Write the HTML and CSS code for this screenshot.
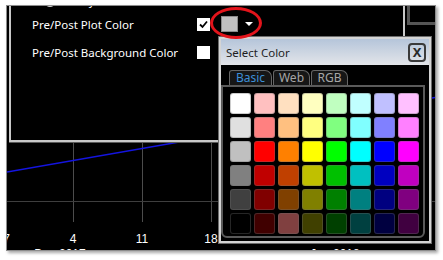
FILE: index.html
```html
<!DOCTYPE html>
<html lang="en">
<head>
    <meta charset="UTF-8">
    <meta name="viewport" content="width=device-width, initial-scale=1.0">
    <title>Select Color</title>
    <link rel="stylesheet" href="styles.css">
</head>
<body>
<div class="shot">
    <!-- chart behind the settings dialog -->
    <svg class="chart" width="428" height="244" viewBox="7 6 428 244">
        <g stroke="#4c4c4c" stroke-width="1">
            <line x1="73.5" y1="140" x2="73.5" y2="222"/>
            <line x1="142.5" y1="140" x2="142.5" y2="222"/>
            <line x1="211.5" y1="140" x2="211.5" y2="222"/>
        </g>
        <line x1="7" y1="201.5" x2="435" y2="201.5" stroke="#3e3e3e"/>
        <line x1="7" y1="172" x2="435" y2="97.5" stroke="#1414e0" stroke-width="1.6"/>
        <path d="M408.5 6 V23.5 H435" stroke="#555" stroke-width="3" fill="none"/>
        <g class="axis" fill="#fff" text-anchor="middle">
            <text x="6.5" y="243">7</text>
            <text x="73" y="243">4</text>
            <text x="142" y="243">11</text>
            <text x="211" y="243">18</text>
            <text x="60" y="258">Dec 2017</text>
            <text x="335" y="258">Jan 2018</text>
        </g>
    </svg>

    <!-- settings dialog -->
    <div class="settings">
        <div class="row row-top">
            <span class="radio"></span>
            <span class="radio-label">Daily</span>
        </div>
        <div class="row">
            <span class="label">Pre/Post Plot Color</span>
            <span class="check">
                <svg width="11" height="11" viewBox="0 0 11 11"><path d="M2 5.5 L4.5 8 L9 2.5" stroke="#000" stroke-width="1.8" fill="none"/></svg>
            </span>
            <span class="color-btn">
                <span class="color-box"></span>
                <span class="arrow"></span>
            </span>
        </div>
        <div class="row">
            <span class="label">Pre/Post Background Color</span>
            <span class="check"></span>
        </div>
    </div>

    <!-- colour picker popup -->
    <div class="picker">
        <div class="picker-title">
            <span>Select Color</span>
            <span class="close">X</span>
        </div>
        <div class="picker-body">
            <div class="tabs">
                <span class="tab active">Basic</span>
                <span class="tab">Web</span>
                <span class="tab">RGB</span>
            </div>
            <div class="swatches" id="swatches"></div>
        </div>
    </div>
</div>
<div class="ring"></div>

<script>
    const colors = [
        '#ffffff','#ffc0c0','#ffe0c0','#ffffc0','#c0ffc0','#c0ffff','#c0c0ff','#ffc0ff',
        '#e0e0e0','#ff8080','#ffc080','#ffff80','#80ff80','#80ffff','#8080ff','#ff80ff',
        '#c0c0c0','#ff0000','#ff8000','#ffff00','#00ff00','#00ffff','#0000ff','#ff00ff',
        '#808080','#c00000','#c04000','#c0c000','#00c000','#00c0c0','#0000c0','#c000c0',
        '#404040','#800000','#804000','#808000','#008000','#008080','#000080','#800080',
        '#000000','#400000','#804040','#404000','#004000','#004040','#000040','#400040'
    ];
    const grid = document.getElementById('swatches');
    colors.forEach(c => {
        const sw = document.createElement('span');
        sw.className = 'swatch';
        sw.style.background = c;
        grid.appendChild(sw);
    });
</script>
</body>
</html>
```

FILE: styles.css
```css
body {
  margin: 0;
  width: 443px;
  height: 260px;
  overflow: hidden;
  background-color: #fff;
  font-family: "Noto Sans", sans-serif;
  position: relative;
}
.shot {
  position: relative;
  margin: 6px 0 0 7px;
  width: 428px;
  height: 244px;
  background-color: #000;
  overflow: hidden;
  box-shadow: 0 0 0 1px #8c8c8c, 2px 2px 3px 1px rgba(0, 0, 0, 0.35);
}
.chart {
  display: block;
}
.axis {
  font-family: "Liberation Sans", Arial, sans-serif;
  font-size: 12px;
}

/* settings dialog */
.settings {
  position: absolute;
  left: 2px;
  top: -20px;
  width: 396px;
  height: 156px;
  box-sizing: border-box;
  border: 2px solid #c9c9c9;
  box-shadow: 0 1px 0 #5a5a5a;
  background-color: #000;
  padding-left: 21px;
}
.row {
  display: flex;
  align-items: center;
  height: 28px;
  color: #fff;
  font-size: 11.5px;
}
.row-top {
  height: 22px;
  align-items: flex-end;
}
.radio {
  width: 12px;
  height: 12px;
  border-radius: 50%;
  background-color: #d8d8d8;
  margin: 0 0 3px 12px;
}
.radio-label {
  margin: 0 0 3px 12px;
  line-height: 12px;
}
.label {
  width: 165px;
}
.check {
  width: 13px;
  height: 13px;
  background-color: #fff;
  display: flex;
  align-items: center;
  justify-content: center;
}
.color-btn {
  display: flex;
  align-items: center;
  margin-left: 11px;
}
.color-box {
  width: 15px;
  height: 14px;
  background-color: #c0c0c0;
  border: 1px solid #8a8a8a;
}
.arrow {
  margin-left: 7px;
  border-left: 4px solid transparent;
  border-right: 4px solid transparent;
  border-top: 4px solid #fff;
}

/* colour picker */
.picker {
  position: absolute;
  left: 211px;
  top: 30px;
  width: 214px;
  box-sizing: border-box;
  border: 1px solid #6c6c6c;
  background-color: #d4d4d4;
  padding: 2px;
}
.picker-title {
  height: 26px;
  display: flex;
  align-items: center;
  justify-content: space-between;
  padding: 0 3px 0 5px;
  background: linear-gradient(#b5c5da, #e3e5e9);
  color: #1e1e1e;
  font-size: 11.5px;
}
.close {
  width: 18px;
  height: 19px;
  box-sizing: border-box;
  border: 2px solid #3a3a3a;
  border-radius: 4px;
  font-weight: bold;
  font-size: 13px;
  display: flex;
  align-items: center;
  justify-content: center;
  color: #2a2a2a;
}
.picker-body {
  background-color: #000;
  padding: 5px 4px 3px 0;
}
.tabs {
  display: flex;
  margin-left: 8px;
  gap: 1px;
}
.tab {
  height: 15px;
  box-sizing: border-box;
  border: 1px solid #666;
  border-bottom: none;
  border-radius: 3px 7px 0 0;
  background-color: #161616;
  color: #a6a6a6;
  font-size: 12px;
  line-height: 14px;
  width: 37px;
  text-align: center;
}
.tab.active {
  width: 43px;
  color: #3d8fd6;
}
.swatches {
  border: 2px solid #5a5a5a;
  border-radius: 0 0 6px 6px;
  display: grid;
  grid-template-columns: repeat(8, 21px);
  gap: 3px;
  padding: 6px 4px 2px 7px;
}
.swatch {
  width: 21px;
  height: 21px;
  box-sizing: border-box;
  border-radius: 3px;
  border: 1px solid rgba(110, 110, 110, 0.35);
}

.ring {
  position: absolute;
  left: 210px;
  top: 7px;
  width: 52px;
  height: 32px;
  box-sizing: border-box;
  border: 3.5px solid #e3141b;
  border-radius: 50%;
}
```
